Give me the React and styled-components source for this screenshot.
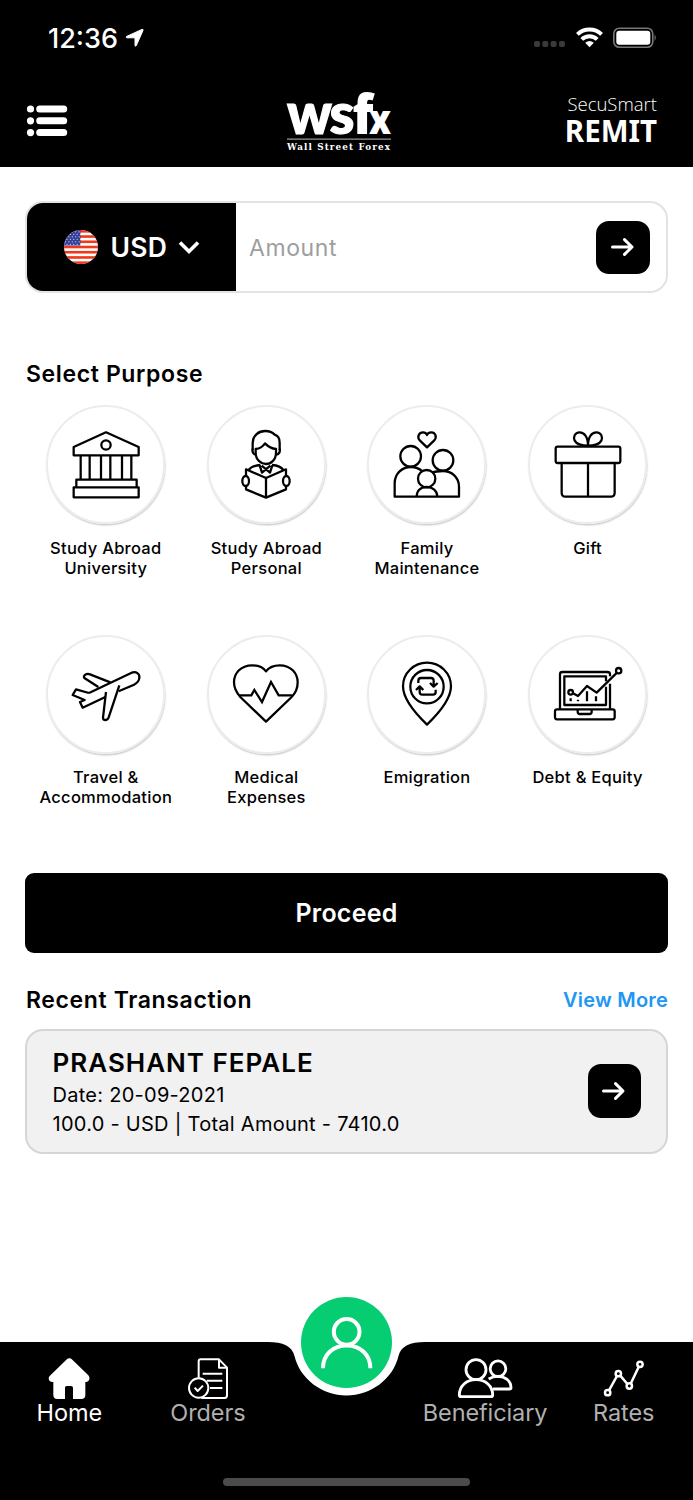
import React from "react";
import styled, { createGlobalStyle } from "styled-components";

const GlobalStyle = createGlobalStyle`
  * {
    box-sizing: border-box;
  }
  body {
    margin: 0;
    background-color: #fff;
    font-family: "Inter", "Liberation Sans", sans-serif;
    color: #000;
  }
`;

const Screen = styled.div`
  display: flex;
  flex-direction: column;
  width: 693px;
  height: 1500px;
  background-color: #fff;
  overflow: hidden;
`;

const Header = styled.header`
  height: 167.4px;
  background-color: #000;
  color: #fff;
`;
const StatusBar = styled.div`
  display: flex;
  align-items: center;
  justify-content: space-between;
  height: 76px;
  padding: 0 36px 0 48px;
`;
const Clock = styled.div`
  display: flex;
  align-items: center;
  gap: 7px;
  padding-top: 2px;
  font-size: 27px;
  font-weight: 500;
  line-height: 32px;
  & svg {
    margin-bottom: 2px;
  }
`;
const TopBar = styled.div`
  display: grid;
  grid-template-columns: 1fr 110px 1fr;
  align-items: start;
  height: 91px;
  padding: 13px 36px 0 26px;
`;
const MenuIcon = styled.svg`
  display: block;
  margin-top: 16px;
`;
const Logo = styled.svg`
  display: block;
  margin-left: -4px;
  overflow: visible;
`;
const Product = styled.div`
  display: flex;
  flex-direction: column;
  align-items: flex-end;
  padding-top: 3px;
  font-family: "Open Sans", "Noto Sans", sans-serif;
  & span {
    font-size: 18.5px;
    font-weight: 300;
    line-height: 24px;
  }
  & strong {
    font-size: 29.5px;
    font-weight: 700;
    line-height: 29px;
    font-family: "Noto Sans", sans-serif;
  }
`;

const Content = styled.main`
  display: flex;
  flex: 1;
  flex-direction: column;
  padding: 34px 25px 0;
`;

const AmountBox = styled.div`
  display: flex;
  align-items: center;
  height: 92px;
  border: 2px solid #e3e3e3;
  border-radius: 18px;
  overflow: hidden;
  padding-right: 16.5px;
`;
const Currency = styled.div`
  display: flex;
  align-items: center;
  align-self: stretch;
  width: 209px;
  padding-left: 36.5px;
  background-color: #000;
  color: #fff;
  font-size: 26.5px;
  font-weight: 600;
  letter-spacing: 0.3px;
  & span {
    margin: 0 10.5px 0 13px;
  }
`;
const Placeholder = styled.div`
  flex: 1;
  padding: 2px 0 0 13px;
  font-size: 23px;
  letter-spacing: 0.6px;
  color: #9e9e9e;
`;
const ArrowButton = styled.button`
  display: flex;
  align-items: center;
  justify-content: center;
  width: 53.5px;
  height: 53.5px;
  padding: 0;
  border: none;
  border-radius: 13px;
  background-color: #000;
`;

const Heading = styled.h2`
  margin: 0;
  font-size: 23px;
  font-weight: 600;
  line-height: 30px;
  letter-spacing: 0.63px;
`;
const PurposeHeading = styled(Heading)`
  margin: 66px 0 16px 1px;
`;
const Purposes = styled.div`
  display: grid;
  grid-template-columns: repeat(4, 160.6px);
  grid-auto-rows: 229.4px;
  padding-left: 0.5px;
`;
const Purpose = styled.div`
  display: flex;
  flex-direction: column;
  align-items: center;
`;
const Circle = styled.div`
  display: flex;
  align-items: center;
  justify-content: center;
  width: 119px;
  height: 119px;
  border: 2px solid #ececec;
  border-radius: 50%;
  box-shadow: 0.5px 1.5px 1.5px rgba(0, 0, 0, 0.2);
`;
const PurposeLabel = styled.div`
  margin-top: 13.5px;
  font-size: 16.5px;
  font-weight: 550;
  line-height: 20px;
  letter-spacing: 0.28px;
  text-align: center;
  white-space: pre-line;
`;

const Proceed = styled.button`
  height: 80px;
  margin-top: 8.5px;
  border: none;
  border-radius: 9px;
  background-color: #000;
  color: #fff;
  font-family: inherit;
  font-size: 25px;
  font-weight: 600;
  letter-spacing: 0.25px;
`;

const RecentRow = styled.div`
  display: flex;
  align-items: center;
  justify-content: space-between;
  margin: 32.5px 0 13.5px 1px;
`;
const ViewMore = styled.a`
  padding-top: 1px;
  font-size: 20px;
  font-weight: 600;
  line-height: 29px;
  letter-spacing: 0.2px;
  color: #2196f3;
`;
const Card = styled.div`
  display: flex;
  align-items: center;
  justify-content: space-between;
  height: 125px;
  padding: 0 25px 0 25.5px;
  border: 2px solid #d6d6d6;
  border-radius: 18px;
  background-color: #f1f1f1;
`;
const Details = styled.div`
  padding-top: 1px;
  font-size: 20px;
  line-height: 28.5px;
  letter-spacing: 0.27px;
  & h3 {
    margin: 0;
    font-size: 26px;
    font-weight: 600;
    line-height: 36px;
    letter-spacing: 1px;
  }
`;

const NavBar = styled.nav`
  position: relative;
  height: 158px;
  background-color: #000;
`;
const Tabs = styled.div`
  display: grid;
  grid-template-columns: repeat(5, 1fr);
  padding-top: 16px;
`;
const Tab = styled.div`
  display: flex;
  flex-direction: column;
  align-items: center;
  font-size: 23.5px;
  line-height: 26px;
  letter-spacing: -0.1px;
  color: ${(props) => (props.$active ? "#fff" : "#b0b0b0")};
`;
const Notch = styled.svg`
  position: absolute;
  top: 0;
  left: 262px;
`;
const ProfileButton = styled.button`
  position: absolute;
  top: -45px;
  left: 301px;
  width: 91px;
  height: 91px;
  padding: 0;
  border: none;
  border-radius: 50%;
  background-color: #07cd72;
  & svg {
    display: block;
  }
`;
const HomeIndicator = styled.div`
  width: 247px;
  height: 8px;
  margin: 52px auto 0;
  border-radius: 4px;
  background-color: #4b4b4b;
`;

function LineIcon({ viewBox, size = 74, height = size, stroke = 6.8, color = "#000", children }) {
  return (
    <svg
      width={size}
      height={height}
      viewBox={viewBox}
      fill="none"
      stroke={color}
      strokeWidth={stroke}
      strokeLinejoin="round"
    >
      {children}
    </svg>
  );
}

const purposes = [
  {
    label: "Study Abroad\nUniversity",
    viewBox: "116 84 222 222",
    icon: (
      <>
        <path d="M130 166V141L227 97L325 141V166Z" />
        <circle cx="227" cy="135" r="14" />
        <path d="M151 166V238M178 166V238M212 166V238M240 166V238M275 166V238M303 166V238" />
        <path d="M138 239H319V262H138ZM130 262H325V292H130Z" />
      </>
    ),
  },
  {
    label: "Study Abroad\nPersonal",
    viewBox: "598 84 222 222",
    icon: (
      <>
        <path d="M669 150V130C669 105 688 93 707 93C720 93 729 98 735 104C745 107 750 115 750 128V150" />
        <path d="M678 158V147C690 146 700 139 706 130C715 139 727 146 739 147V158C739 180 723 192 709 192C695 192 678 180 678 158Z" />
        <path d="M669 146C667 156 670 162 678 164M750 146C752 156 748 162 739 164" />
        <path d="M692 195C675 196 662 202 656 211M727 195C745 196 756 202 762 211" />
        <path d="M690 196L697 218L722 197M728 196L721 218L696 197" />
        <path d="M649 208L709 234L769 208V268L709 293L649 268ZM709 234V293" />
        <ellipse cx="648" cy="243" rx="10" ry="15" fill="#fff" />
        <ellipse cx="770" cy="243" rx="10" ry="15" fill="#fff" />
      </>
    ),
  },
  {
    label: "Family\nMaintenance",
    viewBox: "120 84 222 222",
    icon: (
      <>
        <path d="M231 142L210 122C199 110 208 97 219 97C226 97 230 101 231 105C232 101 237 97 244 97C255 97 263 110 252 122Z" />
        <circle cx="182" cy="169" r="31" />
        <circle cx="279" cy="181" r="31" />
        <circle cx="230" cy="236" r="26" />
        <path d="M217 214C205 203 194 201 183 201C155 201 134 222 134 250V290H327V260C327 232 305 213 279 213C268 213 258 213 246 218" />
        <path d="M200 290C200 272 212 261 230 261C248 261 262 272 262 290" />
      </>
    ),
  },
  {
    label: "Gift",
    viewBox: "601 84 222 222",
    icon: (
      <>
        <rect x="615" y="140" width="194" height="49" rx="6" />
        <path d="M633 189V278Q633 290 645 290H780Q792 290 792 278V189M712 189V290" />
        <path d="M712 137C712 110 700 97 687 97C672 97 667 112 672 122C678 133 695 137 712 137C729 137 746 133 752 122C757 112 752 97 737 97C724 97 712 110 712 137" />
      </>
    ),
  },
  {
    label: "Travel &\nAccommodation",
    viewBox: "117 97 222 222",
    icon: (
      <>
        <path d="M177 205L305 144C318 139 330 147 328 160C327 170 320 176 312 180L266 200" />
        <path d="M268 182L236 278C232 289 219 288 219 279L228 202" />
        <path d="M177 205L138 194L128 211L164 226L150 232L158 249L226 217" />
        <path d="M241 173L180 149C168 145 158 154 163 160L205 187" />
      </>
    ),
  },
  {
    label: "Medical\nExpenses",
    viewBox: "598 97 222 222",
    icon: (
      <>
        <path d="M709 140C700 128 690 122 668 122C632 122 613 147 613 173C613 195 623 207 632 217L709 291L786 217C796 207 804 195 804 173C804 147 785 122 750 122C728 122 718 128 709 140Z" />
        <path d="M630 212H665L674 196L697 232L724 172L747 212H788" strokeLinejoin="miter" />
      </>
    ),
  },
  {
    label: "Emigration",
    viewBox: "120 97 222 222",
    icon: (
      <>
        <path d="M231 300C205 275 159 225 159 185C159 145 192 114 231 114C270 114 303 145 303 185C303 225 257 275 231 300Z" />
        <circle cx="231" cy="186" r="50" />
        <path d="M205 175V168Q205 160 213 160H243Q251 160 251 168V184M240 175L251 186L263 175" />
        <path d="M257 195V202Q257 210 249 210H217Q209 210 209 202V186M198 196L209 185L220 196" />
      </>
    ),
  },
  {
    label: "Debt & Equity",
    viewBox: "601 97 222 222",
    icon: (
      <>
        <path d="M628 253V149Q628 142 635 142H770Q778 142 778 149V155M778 177V253" />
        <path d="M766 170V155H641V241H766V186" />
        <rect x="613" y="254" width="179" height="30" rx="6" />
        <path d="M681 254V261Q681 268 688 268H716Q723 268 723 261V254" />
        <circle cx="660" cy="203" r="7" />
        <circle cx="804" cy="138" r="8" />
        <path d="M667 206L682 214L709 184L738 204L799 144" />
        <path d="M660 221V230M682 225V230M709 200V230M736 215V230" />
      </>
    ),
  },
];

function ArrowRight() {
  return (
    <svg width="24" height="24" viewBox="0 0 24 24" fill="none" stroke="#fff" strokeWidth="3">
      <path d="M1.5 12H20.5M13.5 4.6L21 12L13.5 19.4" strokeLinecap="round" strokeLinejoin="round" />
    </svg>
  );
}

function Flag() {
  const stars = [];
  for (let row = 0; row < 6; row++) {
    for (let col = 0; col < 5; col++) {
      stars.push([1.5 + col * 3.4 + (row % 2) * 1.5, 1.8 + row * 2.5]);
    }
  }
  return (
    <svg width="34" height="34" viewBox="0 0 34 34">
      <clipPath id="flag">
        <circle cx="17" cy="17" r="17" />
      </clipPath>
      <g clipPath="url(#flag)">
        <rect width="34" height="34" fill="#fff" />
        {[0, 1, 2, 3, 4, 5, 6].map((i) => (
          <rect key={i} y={i * 5.23} width="34" height="2.62" fill="#f0391b" />
        ))}
        <rect width="16.5" height="15.5" fill="#33409a" />
        {stars.map(([x, y]) => (
          <circle key={`${x}-${y}`} cx={x} cy={y} r="0.6" fill="#dfe2f5" />
        ))}
      </g>
    </svg>
  );
}

function App() {
  return (
    <Screen>
      <GlobalStyle />
      <Header>
        <StatusBar>
          <Clock>
            12:36
            <svg width="20" height="20" viewBox="0 0 20 20" fill="#fff" stroke="#fff" strokeLinejoin="round">
              <path d="M1.6 8.4L17 1.4Q18.4 1 18 2.4L11.2 17.8Q10.3 18.8 10 17.4V9.8H1.8Q.4 9.2 1.6 8.4Z" />
            </svg>
          </Clock>
          <svg width="124" height="22" viewBox="0 0 124 22">
            <g fill="#3a3a3a">
              <rect x="1" y="14" width="6" height="6" rx="2" />
              <rect x="9.3" y="14" width="6" height="6" rx="2" />
              <rect x="17.6" y="14" width="6" height="6" rx="2" />
              <rect x="26" y="14" width="6" height="6" rx="2" />
            </g>
            <g fill="none" stroke="#fff" strokeWidth="4">
              <path d="M44.4 7.4A17.5 17.5 0 0 1 68.6 7.4" />
              <path d="M48.8 12.4A11.2 11.2 0 0 1 64.2 12.4" />
            </g>
            <path d="M52.2 15.8Q56.5 12.4 60.8 15.8L56.5 20.2Z" fill="#fff" />
            <rect x="80.8" y="1.2" width="39" height="19" rx="5.5" fill="none" stroke="#777" strokeWidth="1.6" />
            <rect x="83.3" y="3.8" width="34" height="14" rx="3" fill="#fff" />
            <path d="M121.6 7.5Q124 10.7 121.6 14Z" fill="#777" />
          </svg>
        </StatusBar>
        <TopBar>
          <MenuIcon width="42" height="32" viewBox="0 0 42 32" fill="#fff">
            <circle cx="4.5" cy="4" r="3.6" />
            <circle cx="4.5" cy="15.8" r="3.6" />
            <circle cx="4.5" cy="27.6" r="3.6" />
            <rect x="10.2" y="0.5" width="31" height="7" rx="3.5" />
            <rect x="10.2" y="12.3" width="31" height="7" rx="3.5" />
            <rect x="10.2" y="24.1" width="31" height="7" rx="3.5" />
          </MenuIcon>
          <Logo width="110" height="66" viewBox="283 89 110 66" fill="#fff">
            <g stroke="#fff" strokeWidth="1.2">
              <text x="287" y="133.5" fontFamily="Lato" fontWeight="900" fontSize="57" textLength="45" lengthAdjust="spacingAndGlyphs">w</text>
              <text x="329.5" y="133.5" fontFamily="Lato" fontWeight="900" fontSize="57" textLength="25" lengthAdjust="spacingAndGlyphs">s</text>
            </g>
            <text x="352.5" y="134" fontFamily="Open Sans" fontWeight="800" fontSize="54" textLength="21" lengthAdjust="spacingAndGlyphs">f</text>
            <text x="369" y="134" fontFamily="Open Sans" fontWeight="800" fontSize="40" textLength="22" lengthAdjust="spacingAndGlyphs">x</text>
            <rect x="287" y="138.6" width="104" height="1" fill="#bbb" />
            <text x="287" y="149.8" fontFamily="DejaVu Serif" fontWeight="700" fontSize="8.8" textLength="103">
              Wall Street Forex
            </text>
          </Logo>
          <Product>
            <span>SecuSmart</span>
            <strong>REMIT</strong>
          </Product>
        </TopBar>
      </Header>

      <Content>
        <AmountBox>
          <Currency>
            <Flag />
            <span>USD</span>
            <svg width="22" height="15" viewBox="0 0 22 15" fill="none" stroke="#fff" strokeWidth="3.6">
              <path d="M2 2.5L11 11.5L20 2.5" />
            </svg>
          </Currency>
          <Placeholder>Amount</Placeholder>
          <ArrowButton>
            <ArrowRight />
          </ArrowButton>
        </AmountBox>

        <PurposeHeading>Select Purpose</PurposeHeading>
        <Purposes>
          {purposes.map((purpose) => (
            <Purpose key={purpose.label}>
              <Circle>
                <LineIcon viewBox={purpose.viewBox}>{purpose.icon}</LineIcon>
              </Circle>
              <PurposeLabel>{purpose.label}</PurposeLabel>
            </Purpose>
          ))}
        </Purposes>

        <Proceed>Proceed</Proceed>

        <RecentRow>
          <Heading>Recent Transaction</Heading>
          <ViewMore>View More</ViewMore>
        </RecentRow>
        <Card>
          <Details>
            <h3>PRASHANT FEPALE</h3>
            <div>Date: 20-09-2021</div>
            <div>100.0 - USD | Total Amount - 7410.0</div>
          </Details>
          <ArrowButton>
            <ArrowRight />
          </ArrowButton>
        </Card>
      </Content>

      <NavBar>
        <Notch width="169" height="56" viewBox="262 1342 169 56" fill="#fff">
          <path d="M262 1341H431V1342H425C410 1342 401 1346 398.5 1356C393 1379 371 1395.5 346.5 1395.5C322 1395.5 300 1379 294.5 1356C292 1346 283 1342 268 1342H262Z" />
        </Notch>
        <ProfileButton>
          <LineIcon viewBox="-126 49.5 273 273" size={91} stroke={12} color="#fff">
            <circle cx="11" cy="154" r="38.5" />
            <path d="M-60 263C-60 222 -30 195 11 195C52 195 82 222 82 263" />
          </LineIcon>
        </ProfileButton>
        <Tabs>
          <Tab $active>
            <svg width="60" height="42" viewBox="118 234 180 126" fill="#fff">
              <path d="M200 239Q209 231 218 239L266 286Q273 295 266 303Q262 307 257 306V345Q257 357 245 357H220V323Q220 318 214 318H201Q196 318 196 323V357H173Q161 357 161 345V306Q155 307 150 303Q144 295 150 288Z" />
            </svg>
            Home
          </Tab>
          <Tab>
            <LineIcon viewBox="534 234 180 126" size={60} height={42} stroke={6} color="#fff">
              <path d="M596 293V244Q596 238 602 238H657L681 263V346Q681 354 674 354H604" />
              <path d="M657 238V263H681M608 281H667M620 302H667M630 324H667" />
              <circle cx="596" cy="324" r="29" />
              <path d="M584 323L593 333L609 317" />
            </LineIcon>
            Orders
          </Tab>
          <div />
          <Tab>
            <LineIcon viewBox="336 234 180 126" size={60} height={42} stroke={8.5} color="#fff">
              <circle cx="399" cy="269" r="30" />
              <path d="M349 345C349 318 370 299 399 299C428 299 449 318 449 345Q449 350 444 350H354Q349 350 349 345Z" />
              <circle cx="465" cy="266" r="23.5" />
              <path d="M437 297C446 291 455 289 465 289C487 289 504 303 504 323Q504 327 499 327H450" />
            </LineIcon>
            Beneficiary
          </Tab>
          <Tab>
            <LineIcon viewBox="752 234 180 126" size={60} height={42} stroke={7.5} color="#fff">
              <path d="M797 331L821 288M831 287L852 312M862 311L886 261" />
              <circle cx="793" cy="338" r="8" />
              <circle cx="825" cy="281" r="8" />
              <circle cx="858" cy="318" r="8" />
              <circle cx="890" cy="253" r="8" />
            </LineIcon>
            Rates
          </Tab>
        </Tabs>
        <HomeIndicator />
      </NavBar>
    </Screen>
  );
}

export default App;
